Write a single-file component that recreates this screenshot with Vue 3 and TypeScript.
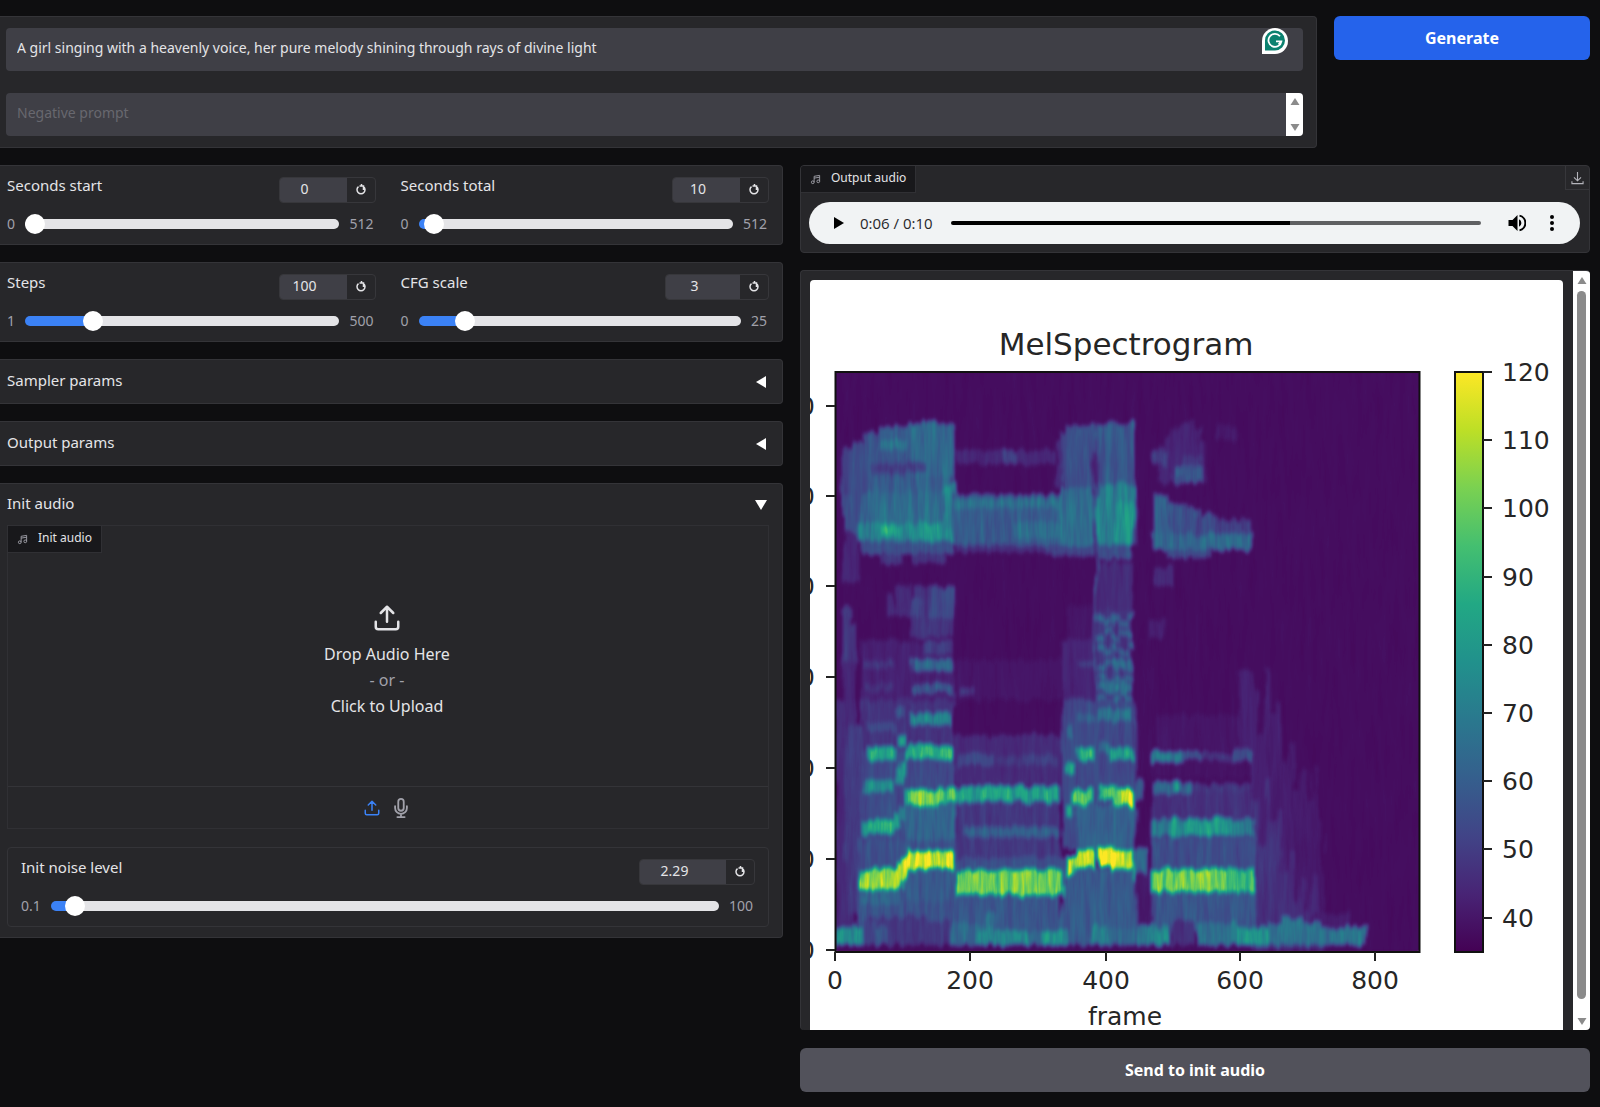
<script setup lang="ts">
import { reactive, ref } from 'vue'

interface Slider {
  id: string
  label: string
  value: number
  min: number
  max: number
  step: number
  initial: number
  size: 'small' | 'medium' | 'large'
}

const timing = reactive<Slider[]>([
  { id: 'seconds-start', label: 'Seconds start', value: 0, min: 0, max: 512, step: 1, initial: 0, size: 'small' },
  { id: 'seconds-total', label: 'Seconds total', value: 10, min: 0, max: 512, step: 1, initial: 10, size: 'small' },
])
const sampling = reactive<Slider[]>([
  { id: 'steps', label: 'Steps', value: 100, min: 1, max: 500, step: 1, initial: 100, size: 'small' },
  { id: 'cfg-scale', label: 'CFG scale', value: 3, min: 0, max: 25, step: 0.1, initial: 3, size: 'medium' },
])
const noise = reactive<Slider[]>([
  { id: 'noise', label: 'Init noise level', value: 2.29, min: 0.1, max: 100, step: 0.01, initial: 2.29, size: 'large' },
])

const groups = [timing, sampling]
const prompt = ref('A girl singing with a heavenly voice, her pure melody shining through rays of divine light')
const negative = ref('')
const position = ref(64)
const initOpen = ref(true)

const fill = (s: Slider) => ({ '--fill': `${((s.value - s.min) / (s.max - s.min)) * 100}%` })

const yTicks = [406, 496, 586, 677, 768, 859, 950]
const xTicks = [
  { x: 835, text: '0' },
  { x: 970, text: '200' },
  { x: 1106, text: '400' },
  { x: 1240, text: '600' },
  { x: 1375, text: '800' },
]
const barTicks = [120, 110, 100, 90, 80, 70, 60, 50, 40].map((v, i) => ({ v, y: 372 + Math.round(i * 68.2) }))

const viridis = ['#440154', '#482475', '#414487', '#355f8d', '#2a788e', '#21918c', '#22a884', '#44bf70', '#7ad151', '#bddf26', '#fde725']
const table = (channel: number) =>
  viridis.map((c) => (parseInt(c.slice(1 + channel * 2, 3 + channel * 2), 16) / 255).toFixed(3)).join(' ')

// Energy cells: x, y, width, height, level (0..1), painted in order.
type Cell = [number, number, number, number, number]
const cells: Cell[] = []

// Decaying tail after the last note: columns of uneven height.
const tail = [690, 735, 668, 712, 700, 760, 742, 790, 770, 800, 765, 820]
tail.forEach((top, i) => {
  const x = 1252 + i * 6
  cells.push([x, top, 6, 130, 0.09 - i * 0.002], [x, top + 110, 6, 840 - top, 0.15 - i * 0.004])
})

// Dome above the last phrase.
const dome = [446, 436, 430, 426, 423, 422, 422, 428, 442]
dome.forEach((top, i) => cells.push([1160 + i * 5, top, 5, 482 - top, 0.1]))

cells.push(
  // upper band, first phrase
  [842, 449, 25, 46, 0.2], [842, 495, 22, 38, 0.26], [843, 533, 16, 50, 0.1], [852, 442, 24, 90, 0.22],
  [864, 433, 24, 100, 0.25], [878, 427, 75, 110, 0.28], [908, 423, 45, 60, 0.34], [880, 440, 26, 10, 0.38],
  [868, 463, 56, 10, 0.19], [872, 476, 80, 20, 0.31], [862, 492, 92, 50, 0.34], [859, 523, 95, 17, 0.46],
  [882, 526, 18, 10, 0.6], [925, 523, 30, 18, 0.5], [944, 484, 12, 45, 0.45], [862, 542, 90, 12, 0.25],
  [880, 554, 22, 10, 0.16], [912, 553, 34, 10, 0.15],
  // sustained notes
  [955, 450, 100, 14, 0.11], [1002, 450, 14, 14, 0.2], [953, 495, 110, 50, 0.29], [954, 499, 106, 9, 0.37],
  [1012, 522, 60, 16, 0.36], [955, 545, 106, 7, 0.14],
  [1056, 442, 8, 46, 0.12], [1060, 434, 10, 50, 0.2], [1065, 426, 29, 66, 0.25], [1060, 488, 35, 58, 0.35],
  [1050, 546, 44, 10, 0.2], [1097, 423, 36, 66, 0.28], [1097, 484, 38, 62, 0.43], [1115, 502, 18, 42, 0.5],
  [1097, 545, 35, 14, 0.24], [1094, 424, 3, 140, 0.1], [1134, 495, 4, 50, 0.18],
  // last phrase
  [1153, 451, 16, 14, 0.18], [1182, 456, 18, 12, 0.16], [1176, 466, 26, 16, 0.26], [1172, 476, 12, 8, 0.2],
  [1215, 426, 24, 14, 0.07], [1152, 494, 16, 52, 0.32], [1168, 504, 18, 42, 0.26], [1184, 508, 16, 38, 0.25],
  [1198, 514, 20, 30, 0.21], [1216, 520, 36, 24, 0.18], [1151, 534, 102, 16, 0.34], [1168, 550, 42, 8, 0.22],
  [1153, 566, 18, 18, 0.11], [1149, 620, 18, 18, 0.09],
  // middle haze
  [842, 608, 10, 60, 0.17], [850, 622, 8, 40, 0.15], [842, 662, 14, 60, 0.11], [888, 594, 8, 22, 0.12],
  [898, 586, 12, 30, 0.12], [912, 587, 41, 50, 0.15], [928, 588, 24, 30, 0.22], [910, 600, 10, 16, 0.2],
  [862, 640, 92, 60, 0.09], [924, 640, 28, 14, 0.18], [1066, 606, 28, 50, 0.06],
  [1062, 640, 32, 60, 0.1], [1097, 562, 36, 50, 0.12], [1097, 610, 36, 90, 0.15], [1094, 560, 3, 140, 0.27],
  // low body
  [836, 700, 20, 230, 0.12], [846, 725, 16, 190, 0.17], [862, 700, 92, 50, 0.15], [862, 750, 92, 100, 0.22],
  [906, 800, 48, 50, 0.32], [858, 840, 100, 90, 0.25], [862, 890, 36, 14, 0.32], [906, 868, 50, 34, 0.28],
  [955, 660, 106, 40, 0.06], [955, 735, 106, 50, 0.12], [955, 802, 106, 60, 0.16], [957, 858, 106, 14, 0.24],
  [955, 892, 106, 40, 0.26], [1062, 700, 74, 150, 0.22], [1076, 804, 58, 44, 0.31], [1062, 868, 74, 62, 0.28],
  [1136, 780, 8, 20, 0.25], [1136, 850, 10, 24, 0.32], [1136, 874, 14, 50, 0.07], [1138, 640, 14, 130, 0.04],
  [1156, 715, 94, 35, 0.06], [1153, 760, 100, 18, 0.05], [1153, 792, 100, 28, 0.14], [1153, 837, 104, 32, 0.23],
  [1151, 890, 104, 40, 0.26], [1238, 670, 16, 80, 0.09], [1312, 914, 40, 14, 0.08], [868, 916, 60, 10, 0.16],
  // harmonics, rising phrase
  [866, 661, 28, 7, 0.16], [868, 683, 26, 8, 0.14], [866, 723, 28, 8, 0.22], [866, 747, 28, 14, 0.6],
  [864, 780, 30, 12, 0.47], [862, 820, 34, 14, 0.6], [859, 869, 39, 21, 0.88],
  [896, 735, 9, 11, 0.5], [895, 768, 7, 16, 0.5], [899, 761, 7, 16, 0.5], [895, 812, 7, 16, 0.52],
  [900, 806, 7, 14, 0.46], [896, 864, 7, 22, 0.9], [901, 857, 7, 22, 0.9], [897, 708, 8, 10, 0.28],
  [912, 659, 41, 12, 0.34], [912, 684, 41, 9, 0.27], [908, 713, 45, 12, 0.46], [906, 746, 48, 14, 0.66],
  [906, 789, 49, 15, 0.74], [914, 789, 12, 17, 0.82], [906, 850, 49, 19, 0.95],
  // harmonics, held note
  [958, 687, 14, 8, 0.16], [960, 753, 36, 12, 0.22], [1000, 755, 56, 10, 0.18], [957, 786, 104, 16, 0.56],
  [966, 827, 95, 10, 0.31], [956, 870, 106, 25, 0.79], [992, 872, 8, 24, 0.72],
  // harmonics, leap
  [1065, 726, 9, 12, 0.34], [1066, 762, 9, 12, 0.55], [1066, 804, 9, 12, 0.52], [1065, 858, 9, 20, 0.94],
  [1076, 661, 18, 6, 0.18], [1076, 714, 18, 8, 0.3], [1076, 747, 18, 13, 0.64], [1074, 789, 20, 15, 0.76],
  [1074, 849, 20, 19, 0.92], [1098, 709, 35, 12, 0.38], [1098, 682, 35, 9, 0.36], [1112, 659, 21, 11, 0.38],
  [1112, 748, 21, 12, 0.6], [1098, 743, 14, 10, 0.36], [1098, 785, 18, 13, 0.7], [1112, 789, 22, 16, 0.76],
  [1124, 790, 9, 16, 0.9], [1098, 847, 18, 19, 0.94], [1112, 850, 22, 19, 0.92], [1133, 862, 3, 18, 0.6],
  // harmonics, last phrase
  [1152, 751, 32, 11, 0.4], [1184, 752, 20, 8, 0.26], [1204, 752, 48, 8, 0.15], [1236, 750, 18, 12, 0.25],
  [1153, 782, 38, 12, 0.35], [1173, 780, 7, 13, 0.52], [1191, 784, 60, 8, 0.16], [1153, 820, 102, 16, 0.42],
  [1173, 818, 7, 19, 0.58], [1183, 819, 48, 17, 0.54], [1151, 869, 104, 23, 0.68], [1151, 869, 78, 23, 0.79],
  // noise floor
  [836, 928, 28, 17, 0.5], [864, 920, 12, 25, 0.2], [876, 926, 12, 19, 0.28], [888, 920, 64, 25, 0.16],
  [952, 924, 36, 21, 0.33], [988, 914, 8, 31, 0.38], [976, 930, 50, 15, 0.46], [1026, 932, 14, 13, 0.34],
  [1040, 930, 28, 15, 0.5], [1068, 925, 24, 20, 0.28], [1092, 926, 16, 19, 0.42], [1108, 928, 28, 17, 0.33],
  [1136, 926, 36, 19, 0.4], [1150, 930, 20, 15, 0.48], [1174, 920, 22, 25, 0.14], [1198, 922, 40, 23, 0.38],
  [1238, 928, 32, 17, 0.52], [1270, 924, 10, 21, 0.38], [1280, 918, 24, 27, 0.36], [1304, 923, 18, 22, 0.36],
  [1320, 928, 46, 17, 0.38],
)

// Zigzag vibrato between the partials of the second leap.
for (let row = 0; row < 6; row++) {
  for (let i = 0; i < 5; i++) {
    cells.push([1098 + i * 7, 614 + row * 15 + ((i + row) % 2 ? 6 : 0), 8, 6, 0.33])
  }
}
const shade = (level: number) => {
  const v = Math.round(level * 255)
  return `rgb(${v}, ${v}, ${v})`
}
</script>

<template>
  <main class="page">
    <section class="top">
      <div class="panel prompts">
        <div class="field">
          <input v-model="prompt" class="text-box" type="text" aria-label="Prompt" />
          <svg class="badge" viewBox="0 0 26 26" aria-hidden="true">
            <path d="M0 26V13A13 13 0 1 1 13 26Z" fill="#fff" />
            <path d="M3 22.500V12.800A10 10 0 1 1 13 22.500Z" fill="#0b8270" />
            <path d="M18 8.200A6.500 6.500 0 1 0 19.400 13.300H14M16.500 16.500L19.400 13.300" fill="none" stroke="#fff" stroke-width="1.800" />
          </svg>
        </div>
        <div class="field">
          <textarea v-model="negative" class="text-box" rows="1" placeholder="Negative prompt" aria-label="Negative prompt"></textarea>
          <div class="mini-scroll" aria-hidden="true">
            <svg viewBox="0 0 10 8"><path d="M5 0.500L9.500 7.500H0.500Z" /></svg>
            <svg viewBox="0 0 10 8"><path d="M5 7.500L0.500 0.500H9.500Z" /></svg>
          </div>
        </div>
      </div>
      <button class="primary" type="button">Generate</button>
    </section>

    <section class="columns">
      <div class="stack">
        <div v-for="(group, g) in groups" :key="g" class="panel sliders">
          <div v-for="s in group" :key="s.id" class="slider">
            <div class="head">
              <label :for="s.id">{{ s.label }}</label>
              <div class="number" :class="s.size">
                <input v-model.number="s.value" type="number" :min="s.min" :max="s.max" :step="s.step" :aria-label="s.label + ' value'" />
                <button type="button" :aria-label="'Reset ' + s.label" @click="s.value = s.initial">
                  <svg viewBox="0 0 12 14"><path d="M3.500 4.600A4 4 0 1 0 8.500 4.600M8.500 8V4H4.500M6.500 4L6.500 2" /></svg>
                </button>
              </div>
            </div>
            <div class="track">
              <span>{{ s.min }}</span>
              <input :id="s.id" v-model.number="s.value" class="range" type="range" :min="s.min" :max="s.max" :step="s.step" :style="fill(s)" />
              <span>{{ s.max }}</span>
            </div>
          </div>
        </div>

        <button class="panel accordion" type="button">
          <span>Sampler params</span>
          <svg viewBox="0 0 10 12"><path d="M0 6L10 0V12Z" /></svg>
        </button>
        <button class="panel accordion" type="button">
          <span>Output params</span>
          <svg viewBox="0 0 10 12"><path d="M0 6L10 0V12Z" /></svg>
        </button>

        <div class="panel init">
          <button class="init-title" type="button" :aria-expanded="initOpen" @click="initOpen = !initOpen">
            <span>Init audio</span>
            <svg viewBox="0 0 12 10"><path d="M0 0H12L6 10Z" /></svg>
          </button>
          <div v-show="initOpen" class="init-body">
            <div class="upload">
              <div class="tab">
                <svg viewBox="0 0 24 24"><path d="M9 18V5l12-2v13M9 9l12-2" /><circle cx="6" cy="18" r="3" /><circle cx="18" cy="16" r="3" /></svg>
                <span>Init audio</span>
              </div>
              <button class="drop" type="button">
                <svg viewBox="0 0 24 24"><path d="M21 15v4a2 2 0 0 1-2 2H5a2 2 0 0 1-2-2v-4M17 8l-5-5-5 5M12 3v12" /></svg>
                <span>Drop Audio Here</span>
                <span class="or">- or -</span>
                <span>Click to Upload</span>
              </button>
              <div class="sources">
                <button type="button" class="active" aria-label="Upload file">
                  <svg viewBox="0 0 24 24"><path d="M21 15v4a2 2 0 0 1-2 2H5a2 2 0 0 1-2-2v-4M17 8l-5-5-5 5M12 3v12" /></svg>
                </button>
                <button type="button" aria-label="Record audio">
                  <svg class="mic" viewBox="0 0 16 22"><rect x="5" y="1" width="6" height="13" rx="3" /><path d="M1.500 9v2a6.500 6.500 0 0 0 13 0V9M8 17.500V21M4 21h8" /></svg>
                </button>
              </div>
            </div>
            <div class="noise">
              <div v-for="s in noise" :key="s.id" class="slider">
                <div class="head">
                  <label :for="s.id">{{ s.label }}</label>
                  <div class="number" :class="s.size">
                    <input v-model.number="s.value" type="number" :min="s.min" :max="s.max" :step="s.step" :aria-label="s.label + ' value'" />
                    <button type="button" :aria-label="'Reset ' + s.label" @click="s.value = s.initial">
                      <svg viewBox="0 0 12 14"><path d="M3.500 4.600A4 4 0 1 0 8.500 4.600M8.500 8V4H4.500M6.500 4L6.500 2" /></svg>
                    </button>
                  </div>
                </div>
                <div class="track">
                  <span>{{ s.min }}</span>
                  <input :id="s.id" v-model.number="s.value" class="range" type="range" :min="s.min" :max="s.max" :step="s.step" :style="fill(s)" />
                  <span>{{ s.max }}</span>
                </div>
              </div>
            </div>
          </div>
        </div>
      </div>

      <div class="stack">
        <div class="panel output">
          <div class="output-head">
            <div class="tab inline">
              <svg viewBox="0 0 24 24"><path d="M9 18V5l12-2v13M9 9l12-2" /><circle cx="6" cy="18" r="3" /><circle cx="18" cy="16" r="3" /></svg>
              <span>Output audio</span>
            </div>
            <button class="download" type="button" aria-label="Download">
              <svg viewBox="0 0 14 14"><path d="M7 0.500V10M3.200 6.300L7 10L10.800 6.300M1 10.500V13H13V10.500" /></svg>
            </button>
          </div>
          <div class="player">
            <button type="button" class="play" aria-label="Play">
              <svg viewBox="0 0 10 12"><path d="M0 0L10 6L0 12Z" /></svg>
            </button>
            <span class="time">0:06 / 0:10</span>
            <input v-model.number="position" class="seek" type="range" min="0" max="100" aria-label="Position" :style="{ '--fill': position + '%' }" />
            <button type="button" class="volume" aria-label="Mute">
              <svg viewBox="0 0 18 18">
                <path d="M0.500 6V12H4.500L9.500 17V1L4.500 6Z" />
                <path d="M11 5.200V12.800A4.200 4.200 0 0 0 11 5.200Z" />
                <path d="M11.500 1.600A7.600 7.600 0 0 1 11.500 16.400" fill="none" stroke="#000" stroke-width="2" />
              </svg>
            </button>
            <button type="button" class="more" aria-label="More options">
              <svg viewBox="0 0 4 16"><circle cx="2" cy="2" r="2" /><circle cx="2" cy="8" r="2" /><circle cx="2" cy="14" r="2" /></svg>
            </button>
          </div>
        </div>

        <div class="panel gallery">
          <svg class="plot" viewBox="810 280 753 750" role="img" aria-label="MelSpectrogram">
            <defs>
              <filter id="colormap" filterUnits="userSpaceOnUse" x="835" y="371" width="585" height="581" color-interpolation-filters="sRGB">
                <feTurbulence type="fractalNoise" baseFrequency="0.16 0.018" numOctaves="3" seed="7" result="grain" />
                <feColorMatrix type="matrix" values="1 0 0 0 0  1 0 0 0 0  1 0 0 0 0  0 0 0 0 1" result="streaks" />
                <feColorMatrix in="grain" type="matrix" values="1 0 0 0 0  0 1 0 0 0  0 0 1 0 0  0 0 0 0 1" result="opaqueGrain" />
                <feDisplacementMap in="SourceGraphic" in2="opaqueGrain" scale="11" xChannelSelector="B" yChannelSelector="G" />
                <feGaussianBlur stdDeviation="1.500 2" result="soft" />
                <feComposite in="soft" in2="streaks" operator="arithmetic" k1="0.620" k2="0.690" k3="0" k4="0" />
                <feComponentTransfer>
                  <feFuncR type="table" :tableValues="table(0)" />
                  <feFuncG type="table" :tableValues="table(1)" />
                  <feFuncB type="table" :tableValues="table(2)" />
                </feComponentTransfer>
              </filter>
              <linearGradient id="scale" x1="0" y1="1" x2="0" y2="0">
                <stop v-for="(c, i) in viridis" :key="c" :offset="i * 10 + '%'" :stop-color="c" />
              </linearGradient>
            </defs>
            <g filter="url(#colormap)">
              <rect x="780" y="320" width="700" height="700" :fill="shade(0.035)" />
              <rect v-for="(c, i) in cells" :key="i" :x="c[0]" :y="c[1]" :width="c[2]" :height="c[3]" :fill="shade(c[4])" />
            </g>
            <rect x="835.500" y="372" width="584" height="580" fill="none" stroke="#111" stroke-width="2" />
            <rect x="1455" y="372" width="28" height="580" fill="url(#scale)" stroke="#111" stroke-width="2" />
            <g stroke="#222" stroke-width="2">
              <line v-for="y in yTicks" :key="y" x1="826" x2="835" :y1="y" :y2="y" />
              <line v-for="t in xTicks" :key="t.x" :x1="t.x" :x2="t.x" y1="952" y2="961" />
              <line v-for="t in barTicks" :key="t.v" x1="1483" x2="1492" :y1="t.y" :y2="t.y" />
            </g>
            <g class="tick">
              <text v-for="y in yTicks" :key="y" x="815" :y="y + 9" text-anchor="end">0</text>
              <text v-for="t in xTicks" :key="t.x" :x="t.x" y="989" text-anchor="middle">{{ t.text }}</text>
              <text v-for="t in barTicks" :key="t.v" x="1502" :y="t.y + 9">{{ t.v }}</text>
              <text x="1125" y="1025" text-anchor="middle">frame</text>
            </g>
            <text class="title" x="1126" y="355" text-anchor="middle">MelSpectrogram</text>
          </svg>
          <div class="scrollbar" aria-hidden="true">
            <svg viewBox="0 0 10 8"><path d="M5 0.500L9.500 7.500H0.500Z" /></svg>
            <div class="thumb"></div>
            <svg viewBox="0 0 10 8"><path d="M5 7.500L0.500 0.500H9.500Z" /></svg>
          </div>
        </div>

        <button class="secondary" type="button">Send to init audio</button>
      </div>
    </section>
  </main>
</template>

<style>
html,
body {
  background: #0e0e10;
}
</style>

<style scoped>
.page {
  display: flex;
  flex-direction: column;
  gap: 17px;
  padding: 16px 10px 15px 0;
  color: #e4e4e7;
  font: 15px/20px 'Noto Sans', sans-serif;
}
.page *,
.page *::before {
  box-sizing: border-box;
}
button,
input,
textarea {
  margin: 0;
  padding: 0;
  border: 0;
  background: none;
  color: inherit;
  font: inherit;
}
button {
  cursor: pointer;
}
svg {
  display: block;
  flex: none;
}
.panel {
  border: 1px solid #343438;
  border-left: 0;
  border-radius: 0 4px 4px 0;
  background: #27272a;
}
.top {
  display: grid;
  grid-template-columns: minmax(0, 1fr) 256px;
  gap: 17px;
  align-items: start;
}
.prompts {
  display: flex;
  flex-direction: column;
  gap: 22px;
  padding: 11px 13px 11px 6px;
}
.field {
  position: relative;
  display: flex;
  height: 43px;
  border-radius: 4px;
  background: #3f3f46;
  overflow: hidden;
}
.text-box {
  flex: 1;
  min-width: 0;
  padding: 10px 11px 13px;
  font-size: 14px;
  outline: 0;
  resize: none;
  overflow: hidden;
}
.text-box::placeholder {
  color: #68686f;
  opacity: 1;
}
.badge {
  position: absolute;
  top: 0;
  right: 15px;
  width: 26px;
  height: 26px;
}
.mini-scroll {
  display: flex;
  flex-direction: column;
  justify-content: space-between;
  align-items: center;
  width: 17px;
  padding: 4px 0;
  background: #fff;
}
.mini-scroll svg,
.scrollbar svg {
  width: 10px;
  height: 9px;
  fill: #8b8b8b;
}
.primary,
.secondary {
  height: 44px;
  border-radius: 6px;
  color: #fff;
  font-size: 16px;
  font-weight: 700;
}
.primary {
  background: #2563eb;
}
.secondary {
  margin-top: 1px;
  background: #52525b;
}
.columns {
  display: grid;
  grid-template-columns: minmax(0, 783fr) minmax(0, 790fr);
  gap: 17px;
  align-items: start;
}
.stack {
  display: flex;
  flex-direction: column;
  gap: 17px;
}
.sliders {
  display: grid;
  grid-template-columns: 1fr 1fr;
  gap: 25px;
  padding: 11px 13px 10px 7px;
}
.head {
  display: flex;
  justify-content: space-between;
  align-items: flex-start;
  height: 25px;
  line-height: 16px;
}
.number {
  display: flex;
  height: 26px;
  border: 1px solid #37373b;
  border-radius: 4px;
  overflow: hidden;
}
.number.small {
  width: 97px;
}
.number.medium {
  width: 104px;
}
.number.large {
  width: 116px;
}
.number input {
  flex: 1;
  min-width: 0;
  padding: 0 17px 2px 0;
  background: #3f3f46;
  text-align: center;
  font-size: 14px;
  outline: 0;
  appearance: textfield;
}
.number input::-webkit-inner-spin-button {
  display: none;
}
.number button {
  display: grid;
  place-items: center;
  width: 28px;
  padding-bottom: 2px;
}
.number svg {
  width: 12px;
  height: 14px;
  fill: none;
  stroke: #e4e4e7;
  stroke-width: 1.500;
}
.track {
  display: flex;
  align-items: center;
  gap: 10px;
  height: 20px;
  margin-top: 12px;
  padding-right: 2px;
  color: #a1a1aa;
  font-size: 14px;
}
.range {
  flex: 1;
  min-width: 0;
  height: 20px;
  appearance: none;
}
.range::-webkit-slider-runnable-track {
  height: 10px;
  border-radius: 5px;
  background: linear-gradient(to right, #3b82f6 var(--fill), #e4e4e7 var(--fill));
}
.range::-webkit-slider-thumb {
  width: 20px;
  height: 20px;
  margin-top: -5px;
  border-radius: 50%;
  background: #fff;
  appearance: none;
}
.accordion,
.init-title {
  display: flex;
  justify-content: space-between;
  align-items: center;
  padding: 0 16px 0 7px;
  text-align: left;
}
.accordion span,
.init-title span,
.tab span {
  padding-bottom: 3px;
}
.accordion {
  height: 45px;
}
.accordion svg {
  width: 10px;
  height: 12px;
  fill: #fff;
}
.init {
  padding-bottom: 10px;
}
.init-title {
  width: 100%;
  height: 41px;
  padding-right: 15px;
}
.init-title svg {
  width: 12px;
  height: 10px;
  fill: #fff;
}
.init-body {
  display: flex;
  flex-direction: column;
  gap: 18px;
  padding: 0 13px 0 7px;
}
.upload {
  position: relative;
  border: 1px solid #303034;
}
.tab {
  position: absolute;
  top: 0;
  left: 0;
  display: flex;
  align-items: center;
  gap: 10px;
  height: 27px;
  padding: 0 9px;
  border: 1px solid #303034;
  border-width: 0 1px 1px 0;
  background: #18181b;
  font-size: 12px;
}
.tab.inline {
  position: static;
}
.tab svg {
  width: 11px;
  height: 11px;
  fill: none;
  stroke: #a1a1aa;
  stroke-width: 2;
}
.drop {
  display: flex;
  flex-direction: column;
  align-items: center;
  justify-content: center;
  width: 100%;
  height: 260px;
  padding: 9px 2px 0 0;
  font-size: 16px;
  line-height: 26px;
}
.drop svg {
  width: 30px;
  height: 30px;
  margin-bottom: 8px;
}
.drop svg,
.sources svg {
  fill: none;
  stroke: currentColor;
  stroke-width: 2;
  stroke-linecap: round;
  stroke-linejoin: round;
}
.or {
  color: #a1a1aa;
}
.sources {
  display: flex;
  justify-content: center;
  align-items: center;
  gap: 12px;
  height: 42px;
  padding-right: 4px;
  border-top: 1px solid #343438;
  color: #a1a1aa;
}
.sources svg {
  width: 18px;
  height: 18px;
}
.sources .mic {
  width: 16px;
  height: 20px;
}
.sources .active {
  color: #3b82f6;
}
.noise {
  padding: 11px 13px 10px;
  border: 1px solid #343438;
  border-radius: 4px;
}
.output,
.gallery {
  border-left: 1px solid #343438;
  border-radius: 4px;
}
.output {
  overflow: hidden;
}
.output-head {
  display: flex;
  justify-content: space-between;
}
.download {
  display: grid;
  place-items: center;
  width: 24px;
  height: 24px;
  border: 1px solid #37373b;
  border-width: 0 0 1px 1px;
}
.download svg {
  width: 13px;
  height: 14px;
  fill: none;
  stroke: #b4b4bb;
  stroke-width: 1.200;
}
.player {
  display: flex;
  align-items: center;
  height: 42px;
  margin: 9px 9px 8px 8px;
  padding: 0 26px 0 25px;
  border-radius: 21px;
  background: #f1f3f4;
}
.play svg {
  width: 10px;
  height: 12px;
}
.time {
  margin: 0 18px 0 16px;
  color: #27272a;
  font: 15px/20px 'Open Sans', sans-serif;
}
.seek {
  flex: 1;
  min-width: 0;
  height: 20px;
  appearance: none;
}
.seek::-webkit-slider-runnable-track {
  height: 4px;
  border-radius: 2px;
  background: linear-gradient(to right, #000 var(--fill), #5f6062 var(--fill));
}
.seek::-webkit-slider-thumb {
  width: 1px;
  height: 4px;
  background: #000;
  appearance: none;
}
.volume {
  margin: 0 24px 0 27px;
}
.volume svg {
  width: 18px;
  height: 18px;
}
.more svg {
  width: 4px;
  height: 16px;
}
.gallery {
  display: flex;
  justify-content: space-between;
  gap: 10px;
  padding: 9px 0 0 9px;
  border-right: 0;
  border-bottom: 0;
  overflow: hidden;
}
.plot {
  flex: 1;
  min-width: 0;
  height: auto;
  border-radius: 4px 4px 0 0;
  background: #fff;
}
.tick {
  fill: #262626;
  font: 25px 'DejaVu Sans', sans-serif;
}
.title {
  fill: #262626;
  font: 31px 'DejaVu Sans', sans-serif;
}
.scrollbar {
  display: flex;
  flex-direction: column;
  align-items: center;
  gap: 6px;
  width: 17px;
  margin-top: -9px;
  padding: 5px 0 4px;
  background: #fff;
}
.scrollbar .thumb {
  flex: 1;
  width: 9px;
  margin-bottom: 12px;
  border-radius: 5px;
  background: #8b8b8b;
}
</style>
